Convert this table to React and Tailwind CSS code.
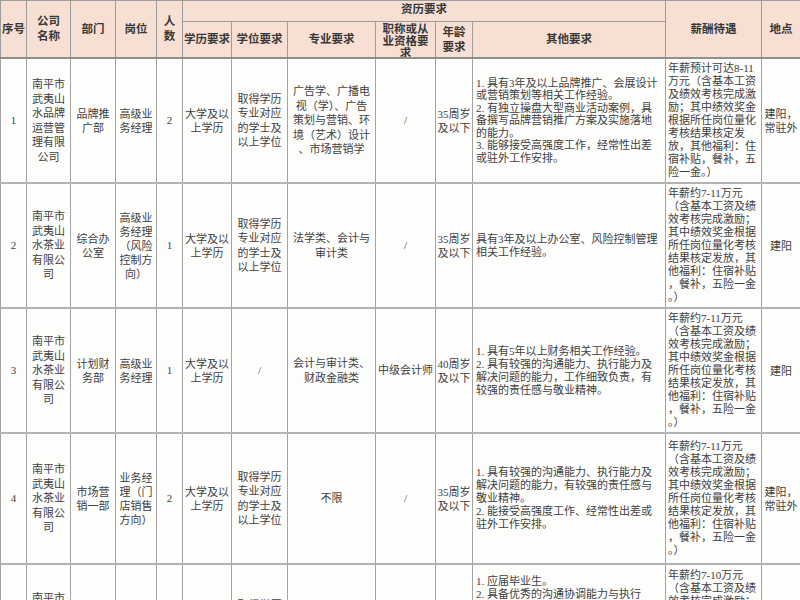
import React from 'react';

const salaryA = ["年薪约7-11万元", "（含基本工资及绩", "效考核完成激励；", "其中绩效奖金根据", "所任岗位量化考核", "结果核定发放，其", "他福利：住宿补贴", "，餐补，五险一金", "。）"];

const rows = [
    {
        no: "1", h: "h-[125px]",
        company: ["南平市", "武夷山", "水品牌", "运营管", "理有限", "公司"],
        dept: ["品牌推", "广部"], post: ["高级业", "务经理"], num: "2",
        edu: ["大学及以", "上学历"], degree: ["取得学历", "专业对应", "的学士及", "以上学位"],
        major: ["广告学、广播电", "视（学）、广告", "策划与营销、环", "境（艺术）设计", "、市场营销学"],
        title: ["/"], age: ["35周岁", "及以下"],
        other: ["1. 具有3年及以上品牌推广、会展设计", "或营销策划等相关工作经验。", "2. 有独立操盘大型商业活动案例，具", "备撰写品牌营销推广方案及实施落地", "的能力。", "3. 能够接受高强度工作，经常性出差", "或驻外工作安排。"],
        dense: true,
        salary: ["年薪预计可达8-11", "万元（含基本工资", "及绩效考核完成激", "励；其中绩效奖金", "根据所任岗位量化", "考核结果核定发", "放，其他福利：住", "宿补贴，餐补，五", "险一金。）"],
        place: ["建阳，", "常驻外"],
    },
    {
        no: "2", h: "h-[125px]",
        company: ["南平市", "武夷山", "水茶业", "有限公", "司"],
        dept: ["综合办", "公室"], post: ["高级业", "务经理", "（风险", "控制方", "向）"], num: "1",
        edu: ["大学及以", "上学历"], degree: ["取得学历", "专业对应", "的学士及", "以上学位"],
        major: ["法学类、会计与", "审计类"],
        title: ["/"], age: ["35周岁", "及以下"],
        other: ["具有3年及以上办公室、风险控制管理", "相关工作经验。"],
        salary: salaryA, place: ["建阳"],
    },
    {
        no: "3", h: "h-[125px]",
        company: ["南平市", "武夷山", "水茶业", "有限公", "司"],
        dept: ["计划财", "务部"], post: ["高级业", "务经理"], num: "1",
        edu: ["大学及以", "上学历"], degree: ["/"],
        major: ["会计与审计类、", "财政金融类"],
        title: ["中级会计师"], age: ["40周岁", "及以下"],
        other: ["1. 具有5年以上财务相关工作经验。", "2. 具有较强的沟通能力、执行能力及", "解决问题的能力，工作细致负责，有", "较强的责任感与敬业精神。"],
        salary: salaryA, place: ["建阳"],
    },
    {
        no: "4", h: "h-[131px]",
        company: ["南平市", "武夷山", "水茶业", "有限公", "司"],
        dept: ["市场营", "销一部"], post: ["业务经", "理（门", "店销售", "方向）"], num: "2",
        edu: ["大学及以", "上学历"], degree: ["取得学历", "专业对应", "的学士及", "以上学位"],
        major: ["不限"],
        title: ["/"], age: ["35周岁", "及以下"],
        other: ["1. 具有较强的沟通能力、执行能力及", "解决问题的能力，有较强的责任感与", "敬业精神。", "2. 能接受高强度工作、经常性出差或", "驻外工作安排。"],
        salary: salaryA, place: ["建阳，", "常驻外"],
    },
    {
        no: "5", h: "h-[126px]",
        company: ["南平市", "武夷山", "水茶业", "有限公", "司"],
        dept: ["市场营", "销二部"], post: ["业务专", "员"], num: "2",
        edu: ["大学及以", "上学历"], degree: ["取得学历", "专业对应", "的学士及", "以上学位"],
        major: ["市场营销类"],
        title: ["/"], age: ["30周岁", "及以下"],
        other: ["1. 应届毕业生。", "2. 具备优秀的沟通协调能力与执行", "力，工作细致负责，有较强的责任感", "与敬业精神。", "3. 熟悉市场营销相关知识，具有一定", "的市场分析能力。", "4. 能接受高强度工作、经常性出差或", "驻外工作安排。"],
        salary: ["年薪约7-10万元", "（含基本工资及绩", "效考核完成激励；", "其中绩效奖金根据", "所任岗位量化考核", "结果核定发放，其", "他福利：住宿补贴", "，餐补，五险一金", "。）"],
        place: ["建阳，", "常驻外"],
    },
];

function Lines({ lines }) {
    return lines.map((l, i) => <div key={i} className="whitespace-nowrap">{l}</div>);
}

const td = "border-x border-[#a3a3a3] border-b-2 border-b-[#b3b3b3] align-middle p-0";
const th = "border border-[#9c9c9c] align-middle p-0 font-bold text-center";

export default function App() {
    return (
        <div className="w-[800px] h-[600px] overflow-hidden bg-[#fdfdfc] text-[#404040]" style={{ fontFamily: '"Liberation Serif", "Noto Sans CJK SC", serif' }}>
            <table className="table-fixed border-collapse w-[800px] text-[11px]">
                <colgroup>
                    <col className="w-[26px]" />
                    <col className="w-[44px]" />
                    <col className="w-[45px]" />
                    <col className="w-[41px]" />
                    <col className="w-[26px]" />
                    <col className="w-[49px]" />
                    <col className="w-[56px]" />
                    <col className="w-[88px]" />
                    <col className="w-[60px]" />
                    <col className="w-[37px]" />
                    <col className="w-[193px]" />
                    <col className="w-[96px]" />
                    <col className="w-[39px]" />
                </colgroup>
                <thead className="bg-[#f7e0d3] text-[11.5px] leading-[15px] text-[#383838]">
                    <tr className="h-[21px]">
                        <th rowSpan={2} className={th}>序号</th>
                        <th rowSpan={2} className={th}>公司<br />名称</th>
                        <th rowSpan={2} className={th}>部门</th>
                        <th rowSpan={2} className={th}>岗位</th>
                        <th rowSpan={2} className={th}>人<br />数</th>
                        <th colSpan={6} className={th}><div className="pb-[3px]">资历要求</div></th>
                        <th rowSpan={2} className={th}>薪酬待遇</th>
                        <th rowSpan={2} className={th}>地点</th>
                    </tr>
                    <tr className="h-[36px] border-b-2 border-b-[#8f8f8f]">
                        <th className={th}>学历要求</th>
                        <th className={th}>学位要求</th>
                        <th className={th}>专业要求</th>
                        <th className={th}>
                            <div className="h-[35px] overflow-hidden leading-[12px] pt-[1px]">职称或从<br />业资格要<br />求</div>
                        </th>
                        <th className={th}>年龄<br />要求</th>
                        <th className={th}>其他要求</th>
                    </tr>
                </thead>
                <tbody>
                    {rows.map((r) => (
                        <tr key={r.no} className={r.h}>
                            <td className={td + " text-center"}>{r.no}</td>
                            <td className={td + " text-center leading-[14.5px]"}><Lines lines={r.company} /></td>
                            <td className={td + " text-center leading-[14px]"}><Lines lines={r.dept} /></td>
                            <td className={td + " text-center leading-[14px]"}><Lines lines={r.post} /></td>
                            <td className={td + " text-center"}>{r.num}</td>
                            <td className={td + " text-center leading-[14px]"}><Lines lines={r.edu} /></td>
                            <td className={td + " text-center leading-[14.5px]"}><Lines lines={r.degree} /></td>
                            <td className={td + " text-center leading-[14.5px]"}><Lines lines={r.major} /></td>
                            <td className={td + " text-center"}><Lines lines={r.title} /></td>
                            <td className={td + " text-center leading-[14px]"}><Lines lines={r.age} /></td>
                            <td className={td + " pl-[3px] overflow-hidden " + (r.dense ? "leading-[12.5px]" : "leading-[13px]")}><Lines lines={r.other} /></td>
                            <td className={td + " pl-[2px] leading-[13px] overflow-hidden"}><Lines lines={r.salary} /></td>
                            <td className={td + " text-center leading-[14px]"}><Lines lines={r.place} /></td>
                        </tr>
                    ))}
                </tbody>
            </table>
        </div>
    );
}
